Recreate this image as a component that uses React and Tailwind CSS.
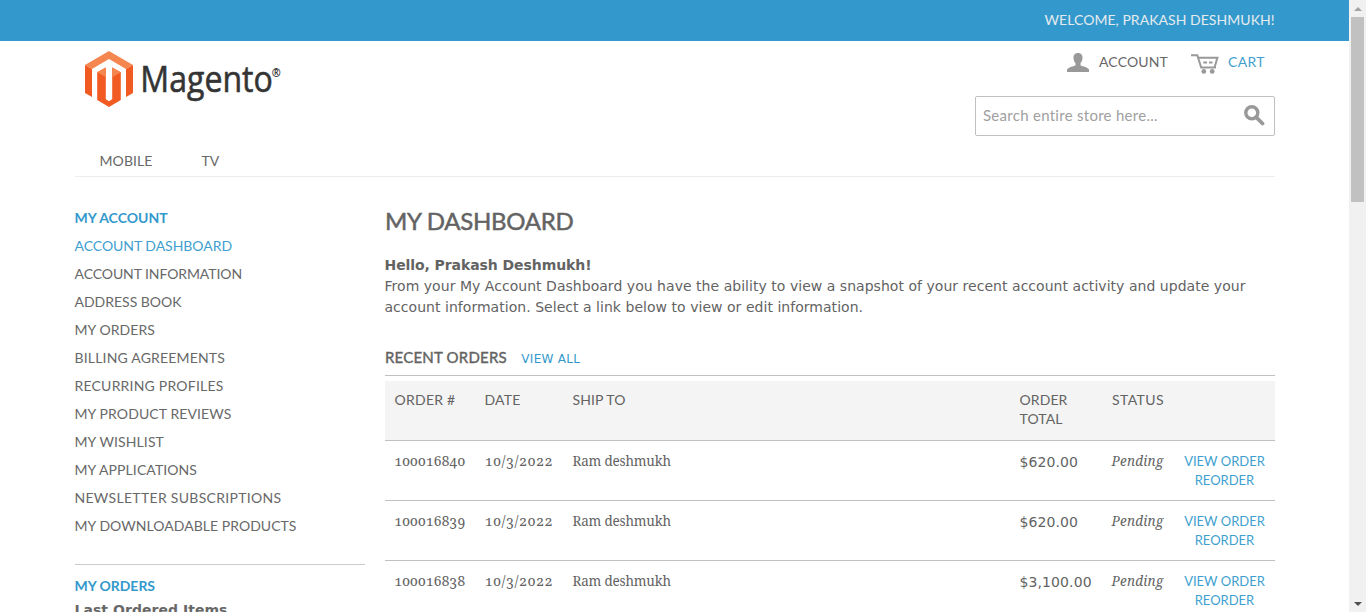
const sidebarLinks = [
  { label: "ACCOUNT DASHBOARD", className: "text-[#419fd0] tracking-[-0.04px]" },
  { label: "ACCOUNT INFORMATION", className: "tracking-[-0.086px]" },
  { label: "ADDRESS BOOK", className: "tracking-[-0.013px]" },
  { label: "MY ORDERS", className: "tracking-[0.073px]" },
  { label: "BILLING AGREEMENTS", className: "tracking-[0.18px]" },
  { label: "RECURRING PROFILES", className: "tracking-[0.21px]" },
  { label: "MY PRODUCT REVIEWS", className: "tracking-[0.1px]" },
  { label: "MY WISHLIST", className: "tracking-[0.11px]" },
  { label: "MY APPLICATIONS", className: "tracking-[0.085px]" },
  { label: "NEWSLETTER SUBSCRIPTIONS", className: "tracking-[0.3px]" },
  { label: "MY DOWNLOADABLE PRODUCTS", className: "tracking-[0.043px]" },
];

const orders = [
  { id: "100016840", date: "10/3/2022", shipTo: "Ram deshmukh", total: "$620.00", status: "Pending" },
  { id: "100016839", date: "10/3/2022", shipTo: "Ram deshmukh", total: "$620.00", status: "Pending" },
  { id: "100016838", date: "10/3/2022", shipTo: "Ram deshmukh", total: "$3,100.00", status: "Pending" },
];

function Logo() {
  return (
    <svg width="200" height="58" viewBox="84 50 200 58" role="img" aria-label="Magento" className="overflow-visible">
      <path d="M109 51 133 65 126 69 109 59 92 69 85 65Z" fill="#f68650" />
      <path d="M85 65 92 69V97L85 93ZM133 65 126 69V97L133 93Z" fill="#f15b22" />
      <path d="M97.2 72.3 105.8 67.5V99.3L109 101.2 112.2 99.3V67.5L120.8 72.3V100L109 107 97.2 100Z" fill="#f15b22" />
      <path d="M97.2 72.3 105.8 67.5V77.2ZM112.2 67.5 120.8 72.3 112.2 77.2Z" fill="#f68650" />
      <text x="140.300" y="92.300" fontFamily="Open Sans, sans-serif" fontSize="36.500" fontWeight="500" fill="#343434" stroke="#343434" strokeWidth="0.600" textLength="132.500" lengthAdjust="spacingAndGlyphs">Magento</text>
      <text x="271.800" y="77" fontFamily="Open Sans, sans-serif" fontSize="12" fontWeight="700" fill="#343434" textLength="9" lengthAdjust="spacingAndGlyphs">®</text>
    </svg>
  );
}

function AccountIcon() {
  return (
    <svg width="22" height="19" viewBox="0 0 22 19" fill="#999999">
      <path d="M11 0C7.900 0 6.300 2.200 6.500 5.200 6.600 7.300 7.500 9 8.500 10V12.200C7 13.300 1.500 13.800 0 16.600V19H22V16.600C20.500 13.800 15 13.300 13.500 12.200V10C14.500 9 15.400 7.300 15.500 5.200 15.700 2.200 14.100 0 11 0Z" />
    </svg>
  );
}

function CartIcon() {
  return (
    <svg width="28" height="20" viewBox="0 0 28 20" fill="none" stroke="#999999">
      <path d="M0 1.200H6.300L10.200 13.500H25" strokeWidth="2" />
      <path d="M7.300 3.700H26.400L23.600 13.200" strokeWidth="2" />
      <path d="M12.300 8.600H16M18 8.600H21.500" strokeWidth="2" />
      <circle cx="12.800" cy="17.400" r="2.400" fill="#999999" stroke="none" />
      <circle cx="21.200" cy="17.400" r="2.400" fill="#999999" stroke="none" />
    </svg>
  );
}

function SearchIcon() {
  return (
    <svg width="21" height="21" viewBox="0 0 21 21" fill="none" stroke="#999999">
      <circle cx="7.800" cy="7.800" r="6" strokeWidth="3.400" />
      <path d="M12.300 12.300 18.500 18.500" strokeWidth="3.800" strokeLinecap="round" />
    </svg>
  );
}

function Scrollbar() {
  return (
    <div className="flex h-full w-[17px] shrink-0 flex-col items-center justify-between bg-[#f1f1f1]">
      <div className="flex flex-col items-center">
        <div className="flex h-[17px] items-center">
          <svg width="8" height="4" viewBox="0 0 8 4"><path d="M4 0 8 4H0Z" fill="#a3a3a3" /></svg>
        </div>
        <div className="h-[185px] w-[13px] bg-[#c1c1c1]" />
      </div>
      <div className="flex h-[17px] items-center">
        <svg width="8" height="4" viewBox="0 0 8 4"><path d="M0 0H8L4 4Z" fill="#505050" /></svg>
      </div>
    </div>
  );
}

const columns = "grid grid-cols-[90px_88px_447px_92px_72px_101px]";

function Header() {
  return (
    <header className="ml-[75px] flex h-[136px] w-[1200px] flex-col border-b border-[#ededed]">
      <div className="flex h-[95px] justify-between">
        <div className="pt-[9px] pl-[9px]"><Logo /></div>
        <div className="flex flex-col items-end">
          <div className="mr-[10px] flex h-[41px] items-center">
            <span className="mt-[2px]"><AccountIcon /></span>
            <span className="ml-[10px] w-[70px] tracking-[0.14px]">ACCOUNT</span>
            <span className="mt-[5px] ml-[22px]"><CartIcon /></span>
            <span className="ml-[9px] w-[37px] tracking-[0.36px] text-[#419fd0]">CART</span>
          </div>
          <div className="mt-[14px] flex h-10 w-[300px] shrink-0 items-center justify-between rounded-[2px] border border-[#c0c0c0] pr-[9px] pl-[7px]">
            <span className="mb-[2px] text-[15px] tracking-[0.28px] text-[#a0a0a0]">Search entire store here...</span>
            <span className="mb-[2px]"><SearchIcon /></span>
          </div>
        </div>
      </div>
      <nav className="flex h-[40px] items-end gap-[49px] pb-[5px] pl-[24.500px]">
        <span className="tracking-[0.09px]">MOBILE</span>
        <span>TV</span>
      </nav>
    </header>
  );
}

function Sidebar() {
  return (
    <aside className="w-[290px] shrink-0">
      <div className="-ml-[0.500px]">
        <h2 className="h-[28px] leading-[28px] font-bold text-[#3399cc]">MY ACCOUNT</h2>
        <ul>
          {sidebarLinks.map((link) => (
            <li key={link.label} className={`h-[28px] leading-[28px] whitespace-nowrap ${link.className}`}>{link.label}</li>
          ))}
        </ul>
      </div>
      <div className="mt-[24px] border-t border-[#cccccc] pt-[7px]">
        <h2 className="-ml-[0.500px] h-[28px] leading-[28px] font-bold tracking-[-0.036px] text-[#3399cc]">MY ORDERS</h2>
        <p className="-ml-[0.500px] font-['DejaVu_Sans',sans-serif] leading-[21px] font-bold tracking-[0.044px]">Last Ordered Items</p>
      </div>
    </aside>
  );
}

function OrdersTable() {
  return (
    <div className="mt-[5px]">
      <div className={`${columns} h-[60px] border-b border-[#c0c0c0] bg-[#f4f4f4] pt-[9px] leading-[19px]`}>
        <span className="pl-[9.500px] tracking-[0.26px]">ORDER #</span>
        <span className="pl-[9.500px] tracking-[0.2px]">DATE</span>
        <span className="pl-[9.500px] tracking-[0.08px]">SHIP TO</span>
        <span className="pl-[9.500px] tracking-[0.1px]">ORDER<br />TOTAL</span>
        <span className="pl-[10px] tracking-[0.41px]">STATUS</span>
        <span />
      </div>
      {orders.map((order) => (
        <div key={order.id} className={`${columns} h-[60px] border-b border-[#c0c0c0] pt-[10px] font-['Noto_Serif',serif] text-[13.500px] leading-[19px] whitespace-nowrap`}>
          <span className="pl-[9px] text-[14px] tracking-[-0.2px] oldstyle-nums">{order.id}</span>
          <span className="pl-[9.500px] text-[14px] tracking-[0.4px] oldstyle-nums">{order.date}</span>
          <span className="pt-[1px] pl-[9.500px] tracking-[-0.2px]">{order.shipTo}</span>
          <span className="pt-[2px] pl-[9.500px] font-['DejaVu_Sans',sans-serif] text-[14px] tracking-[0.1px]">{order.total}</span>
          <span className="pt-[1px] pl-[9.500px] tracking-[0.2px] italic">{order.status}</span>
          <span className="pt-[1px] text-center font-['Lato',sans-serif] text-[13px] text-[#419fd0]">VIEW ORDER<br />REORDER</span>
        </div>
      ))}
    </div>
  );
}

export default function App() {
  return (
    <div className="flex h-[612px] w-[1366px] overflow-hidden bg-white font-['Lato',sans-serif] text-[14px] leading-[20px] text-[#686868]">
      <div className="h-full min-w-0 flex-1 overflow-hidden">
        <div className="flex h-[41px] items-center justify-end bg-[#3399cc] pr-[74.500px] pb-[2px] tracking-[0.044px] text-[#e4ebef]">WELCOME, PRAKASH DESHMUKH!</div>
        <Header />
        <div className="ml-[75px] flex w-[1200px] gap-5 pt-[27px]">
          <Sidebar />
          <main className="min-w-0 flex-1 text-[#636363]">
            <h1 className="h-[51px] pt-px text-[24px] leading-[32px] tracking-[-0.27px] whitespace-nowrap [-webkit-text-stroke:0.5px]">MY DASHBOARD</h1>
            <div className="-ml-[0.500px] font-['DejaVu_Sans',sans-serif] leading-[21px] whitespace-nowrap">
              <p className="font-bold tracking-[-0.075px]">Hello, Prakash Deshmukh!</p>
              <p className="tracking-[0.034px]">From your My Account Dashboard you have the ability to view a snapshot of your recent account activity and update your<br />account information. Select a link below to view or edit information.</p>
            </div>
            <div className="mt-[26px] flex h-[32px] items-baseline gap-[14.500px] border-b border-[#c0c0c0] pt-[3px]">
              <h2 className="text-[15px] tracking-[0.2px] [-webkit-text-stroke:0.4px]">RECENT ORDERS</h2>
              <span className="font-['DejaVu_Sans',sans-serif] text-[12px] tracking-[0.3px] text-[#3399cc]">VIEW ALL</span>
            </div>
            <OrdersTable />
          </main>
        </div>
      </div>
      <Scrollbar />
    </div>
  );
}
